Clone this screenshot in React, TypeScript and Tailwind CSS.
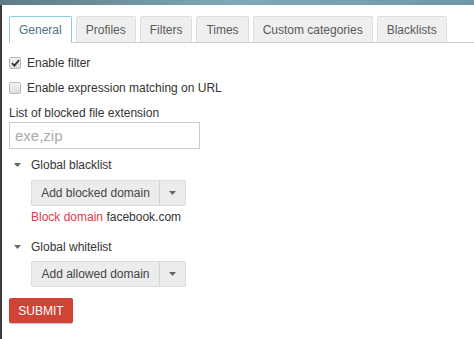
import React from 'react';

const tabs = ['General', 'Profiles', 'Filters', 'Times', 'Custom categories', 'Blacklists'];

const Caret = () => (
  <svg width="7" height="4" viewBox="0 0 7 4" className="shrink-0">
    <path d="M0 0h7L3.5 4z" fill="#666" />
  </svg>
);

const Check: React.FC<{ checked?: boolean }> = ({ checked }) => (
  <span className="flex h-[12px] w-[12px] items-center justify-center rounded-[2px] border border-[#b8b8b8] bg-gradient-to-b from-[#f4f4f4] to-[#dcdcdc]">
    {checked && (
      <svg width="9" height="8" viewBox="0 0 9 8">
        <path d="M1 4.2l2.4 2.4L8 1.2" fill="none" stroke="#333" strokeWidth="1.8" />
      </svg>
    )}
  </span>
);

const SplitButton: React.FC<{ label: string }> = ({ label }) => (
  <div className="ml-[22px] flex h-[26px] w-[155px] rounded-[2px] border border-[#dcdcdc] bg-[#ececec] text-[12px] text-[#444]">
    <div className="flex flex-1 items-center justify-center border-r border-[#d4d4d4]">{label}</div>
    <div className="flex w-[25px] items-center justify-center">
      <Caret />
    </div>
  </div>
);

const App: React.FC = () => {
  return (
    <div className="flex h-[339px] w-[474px] flex-col overflow-hidden bg-white font-['Liberation_Sans',Arial,sans-serif]">
      <div className="h-[5px] bg-gradient-to-r from-[#5d7b86] via-[#7fa9b8] to-[#6e98a8]" />
      <div className="flex flex-1">
        <div className="w-[2px] bg-[#3a3a3a]" />
        <div className="flex-1 pl-[7px] pt-[11px]">
          <div className="flex items-end gap-[4px] whitespace-nowrap border-b border-[#cfcfcf] text-[12px]">
            {tabs.map((t, i) =>
              i === 0 ? (
                <div
                  key={t}
                  className="-mb-px flex h-[27px] items-center rounded-t-[2px] border border-b-0 border-[#8ecfe3] bg-white px-[9px] text-[#4d7383]"
                >
                  {t}
                </div>
              ) : (
                <div
                  key={t}
                  className="flex h-[26px] items-center rounded-t-[2px] border border-b-0 border-[#dedede] bg-[#efefef] px-[9px] text-[#5a5a5a]"
                >
                  {t}
                </div>
              )
            )}
          </div>

          <div className="text-[12px] leading-[14px] text-[#333]">
            <label className="mt-[13px] flex items-center gap-[6px]">
              <Check checked />
              <span>Enable filter</span>
            </label>
            <label className="mt-[11px] flex items-center gap-[6px]">
              <Check />
              <span>Enable expression matching on URL</span>
            </label>

            <div className="mt-[11px]">List of blocked file extension</div>
            <input
              placeholder="exe,zip"
              className="mt-[2px] h-[27px] w-[191px] border border-[#cccccc] px-[5px] text-[15px] outline-none placeholder:text-[#aaaaaa]"
            />

            <div className="mt-[9px] flex items-center gap-[10px] pl-[5px]">
              <Caret />
              <span>Global blacklist</span>
            </div>
            <div className="mt-[8px]">
              <SplitButton label="Add blocked domain" />
            </div>
            <div className="ml-[22px] mt-[4px]">
              <span className="text-[#e8364a]">Block domain</span> facebook.com
            </div>

            <div className="mt-[16px] flex items-center gap-[10px] pl-[5px]">
              <Caret />
              <span>Global whitelist</span>
            </div>
            <div className="mt-[7px]">
              <SplitButton label="Add allowed domain" />
            </div>

            <button className="mt-[11px] h-[25px] w-[64px] rounded-[2px] bg-[#cf4436] text-[12px] text-white shadow-[0_1px_1px_rgba(0,0,0,0.25)]">
              SUBMIT
            </button>
          </div>
        </div>
      </div>
    </div>
  );
};

export default App;
